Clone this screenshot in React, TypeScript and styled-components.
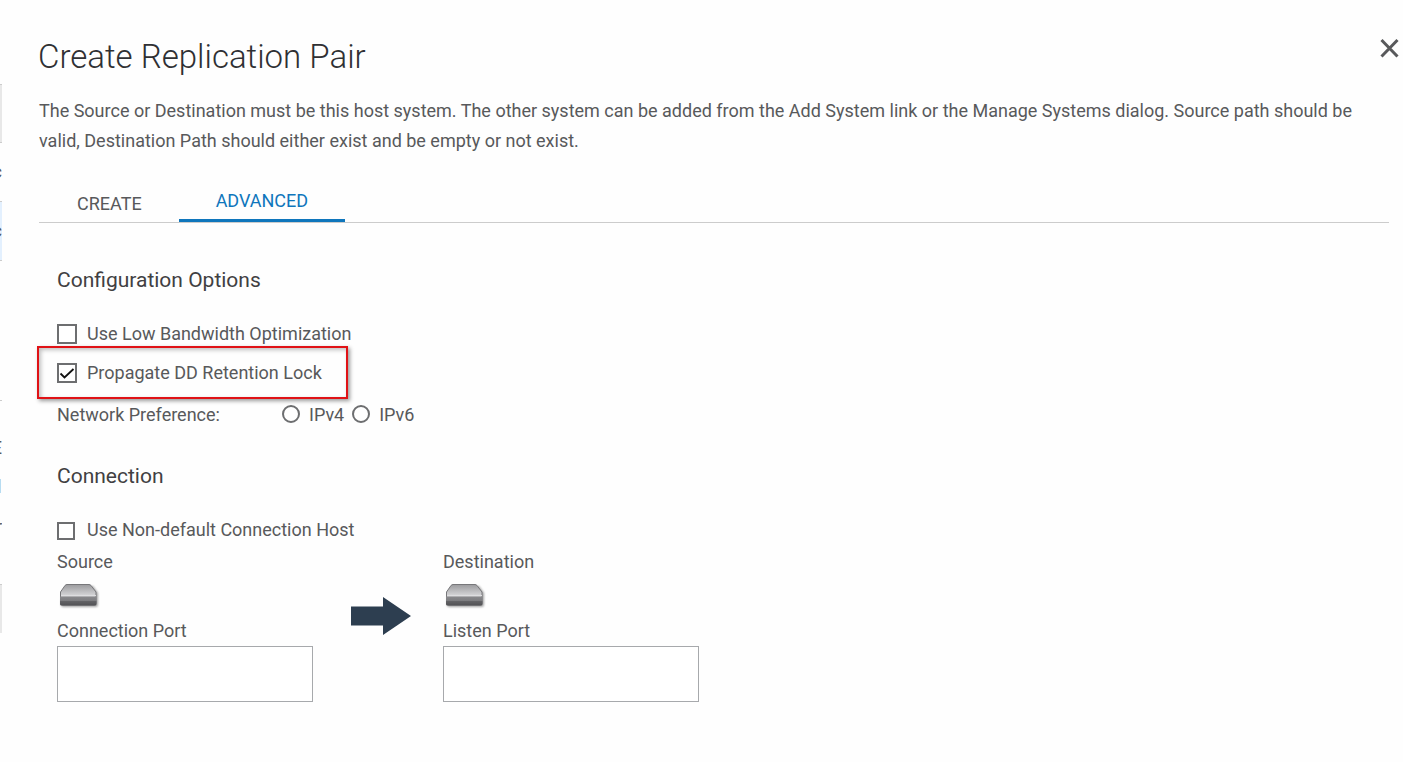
import React, { useState } from "react";
import styled, { createGlobalStyle } from "styled-components";

const GlobalStyle = createGlobalStyle`
  *, *::before, *::after { box-sizing: border-box; }
  body {
    margin: 0;
    background: #fefefe;
    color: #58595b;
    font-family: Roboto, "Liberation Sans", sans-serif;
    font-size: 18px;
    line-height: 30px;
  }
`;

const Page = styled.div`
  display: flex;
  align-items: stretch;
  min-height: 100vh;
`;

/* Edge of the page that stays visible beside the dialog */
const Backdrop = styled.div`
  flex: 0 0 2px;
  overflow: hidden;
  padding-top: 84px;
`;

const Cell = styled.div<{ $height: number; $fill?: string; $top?: boolean; $bottom?: boolean }>`
  display: flex;
  align-items: center;
  justify-content: flex-end;
  overflow: hidden;
  width: 2px;
  height: ${(p) => p.$height}px;
  background: ${(p) => p.$fill ?? "transparent"};
  border-top: ${(p) => (p.$top ? "1px solid #cccccc" : "0")};
  border-bottom: ${(p) => (p.$bottom ? "1px solid #cccccc" : "0")};
`;

const Accent = styled.div`
  width: 1px;
  height: 14px;
  background: #b7dcf1;
`;

const Dialog = styled.section`
  flex: 1;
  min-width: 0;
  padding: 33px 14px 60px 37px;
`;

const Header = styled.header`
  display: flex;
  justify-content: space-between;
  align-items: flex-start;
  margin-right: -14px;
  margin-left: -1px;
`;

const Title = styled.h1`
  margin: 0;
  color: #2f3033;
  font-size: 33px;
  font-weight: 300;
  line-height: 48px;
`;

const CloseButton = styled.button`
  display: flex;
  margin: 3px 0 0;
  padding: 0;
  border: 0;
  background: none;
  cursor: pointer;
`;

const Description = styled.p`
  margin: 15px 24px 0 0;
`;

const Tabs = styled.div`
  display: flex;
  align-items: flex-end;
  height: 47px;
  margin: 20px 0 39px;
  padding-left: 1px;
  border-bottom: 1px solid #cccccc;
`;

const Tab = styled.button<{ $active?: boolean }>`
  height: 43px;
  padding: ${(p) => (p.$active ? "4px 37px 0" : "7px 37px 0")};
  border: 0;
  border-bottom: ${(p) => (p.$active ? "3px solid #0f76bc" : "0")};
  background: none;
  color: ${(p) => (p.$active ? "#0f76bc" : "#58595b")};
  font: inherit;
  cursor: pointer;
`;

const Body = styled.form`
  display: flex;
  flex-direction: column;
  align-items: flex-start;
  padding-left: 18px;
`;

const Heading = styled.h2`
  margin: 0;
  color: #414042;
  font-size: 21px;
  font-weight: 400;
  line-height: 36px;
`;

const Choice = styled.label`
  display: flex;
  align-items: center;
`;

const OptionList = styled.div`
  display: flex;
  flex-direction: column;
  align-items: flex-start;
  padding-top: 21px;
`;

const Highlight = styled.div`
  width: 311px;
  height: 53px;
  margin: -3px 0 1px -20px;
  padding: 10px 18px 7px;
  border: 2px solid #e01216;
  box-shadow: 2px 2px 4px rgba(0, 0, 0, 0.4), inset 2px 2px 4px rgba(0, 0, 0, 0.25);
`;

const Checkbox = styled.input<{ $compact?: boolean }>`
  appearance: none;
  width: ${(p) => (p.$compact ? 18 : 20)}px;
  height: ${(p) => (p.$compact ? 18 : 20)}px;
  margin: ${(p) => (p.$compact ? "2px 12px 0 0" : "0 10px 0 0")};
  border: 2px solid #6d6e70;
  background: #ffffff;

  &:checked {
    background: #ffffff
      url("data:image/svg+xml,%3Csvg xmlns='http://www.w3.org/2000/svg' viewBox='0 0 16 16'%3E%3Cpath d='M1.500 8.500 5.500 12.500 14.500 4' fill='none' stroke='%23111' stroke-width='1.800'/%3E%3C/svg%3E")
      center / 16px 16px no-repeat;
  }
`;

const RadioRow = styled.fieldset`
  display: flex;
  align-items: center;
  margin: 0 0 28px;
  padding: 0;
  border: 0;
`;

const RadioCaption = styled.span`
  width: 225px;
`;

const Radio = styled.input`
  appearance: none;
  width: 18px;
  height: 18px;
  margin: 0 9px 2px 0;
  border: 2px solid #6d6e70;
  border-radius: 50%;
  background: #ffffff;

  &:checked { box-shadow: inset 0 0 0 3px #ffffff; background: #6d6e70; }
`;

const RadioChoice = styled(Choice)`
  margin-right: 8px;
`;

const Endpoints = styled.div`
  display: flex;
  align-items: flex-start;
  padding-top: 2px;
`;

const Endpoint = styled.div`
  display: flex;
  flex-direction: column;
  width: 256px;
`;

const PortInput = styled.input`
  width: 100%;
  height: 56px;
  padding: 0 12px;
  border: 1px solid #a7a9ac;
  border-radius: 0;
  background: #ffffff;
  color: inherit;
  font: inherit;
`;

const DriveSlot = styled.div`
  display: flex;
  align-items: center;
  height: 39px;
  padding: 0 0 3px 2px;
`;

const ArrowSlot = styled.div`
  display: flex;
  justify-content: center;
  width: 130px;
  padding: 50px 0 0 6px;
`;

const Drive = ({ id }: { id: string }) => (
  <svg width="42" height="28" viewBox="0 0 42 28" aria-hidden="true">
    <defs>
      <linearGradient id={`${id}-lid`} gradientUnits="userSpaceOnUse" x1="0" y1="3" x2="0" y2="14">
        <stop offset="0" stopColor="#98989b" />
        <stop offset="1" stopColor="#d2d2d4" />
      </linearGradient>
      <linearGradient id={`${id}-face`} x1="0" y1="0" x2="0" y2="1">
        <stop offset="0" stopColor="#8a8a8d" />
        <stop offset="0.5" stopColor="#7c7c7f" />
        <stop offset="0.55" stopColor="#626265" />
        <stop offset="1" stopColor="#525255" />
      </linearGradient>
      <filter id={`${id}-blur`} x="-20%" y="-20%" width="140%" height="150%">
        <feGaussianBlur stdDeviation="1" />
      </filter>
    </defs>
    <path d="M3 12 8 5H34L39 12V23Q39 26 37 26H4Q2 26 2 23Z" fill="#000" opacity=".35" filter={`url(#${id}-blur)`} />
    <path d="M1.500 11 6 4.500Q7 3.500 8 3.500H30Q31 3.500 32 4.500L37 11V22Q37 24 35 24H3.500Q1.500 24 1.500 22Z" fill={`url(#${id}-lid)`} stroke="#77777a" />
    <path d="M1 15.500H37.500V23Q37.500 24.500 36 24.500H2.500Q1 24.500 1 23Z" fill={`url(#${id}-face)`} />
    <path d="M2 14.500H37" stroke="#dedee0" />
  </svg>
);

export default function App() {
  const [lowBandwidth, setLowBandwidth] = useState(false);
  const [retention, setRetention] = useState(true);
  const [customHost, setCustomHost] = useState(false);

  return (
    <>
      <GlobalStyle />
      <Page>
        <Backdrop aria-hidden="true">
          <Cell $height={59} $fill="#e8e8e8" $top $bottom />
          <Cell $height={58}>c</Cell>
          <Cell $height={60} $fill="#e3f0fe" $top $bottom>c</Cell>
          <Cell $height={140} $bottom />
          <Cell $height={15} />
          <Cell $height={63}>E</Cell>
          <Accent />
          <Cell $height={68}>r</Cell>
          <Cell $height={23} />
          <Cell $height={49} $fill="#e8e8e8" $top />
        </Backdrop>
        <Dialog role="dialog" aria-labelledby="dialog-title">
          <Header>
            <Title id="dialog-title">Create Replication Pair</Title>
            <CloseButton type="button" aria-label="Close">
              <svg width="26" height="24" viewBox="0 0 26 24" fill="none" stroke="#58595b" strokeWidth="3">
                <path d="M4.500 4 20.500 20.500M20.500 4 4.500 20.500" />
              </svg>
            </CloseButton>
          </Header>
          <Description>
            The Source or Destination must be this host system. The other system can be added from the Add System link
            or the Manage Systems dialog. Source path should be valid, Destination Path should either exist and be
            empty or not exist.
          </Description>
          <Tabs role="tablist">
            <Tab type="button" role="tab" aria-selected={false}>CREATE</Tab>
            <Tab type="button" role="tab" aria-selected $active>ADVANCED</Tab>
          </Tabs>
          <Body onSubmit={(e) => e.preventDefault()}>
            <Heading>Configuration Options</Heading>
            <OptionList>
              <Choice>
                <Checkbox type="checkbox" checked={lowBandwidth} onChange={(e) => setLowBandwidth(e.target.checked)} />
                Use Low Bandwidth Optimization
              </Choice>
              <Highlight>
                <Choice>
                  <Checkbox type="checkbox" checked={retention} onChange={(e) => setRetention(e.target.checked)} />
                  Propagate DD Retention Lock
                </Choice>
              </Highlight>
            </OptionList>
            <RadioRow aria-label="Network Preference">
              <RadioCaption>Network Preference:</RadioCaption>
              <RadioChoice><Radio type="radio" name="ip" />IPv4</RadioChoice>
              <RadioChoice><Radio type="radio" name="ip" />IPv6</RadioChoice>
            </RadioRow>
            <Heading>Connection</Heading>
            <OptionList>
              <Choice>
                <Checkbox $compact type="checkbox" checked={customHost} onChange={(e) => setCustomHost(e.target.checked)} />
                Use Non-default Connection Host
              </Choice>
            </OptionList>
            <Endpoints>
              <Endpoint>
                <span>Source</span>
                <DriveSlot><Drive id="source" /></DriveSlot>
                <label htmlFor="connection-port">Connection Port</label>
                <PortInput id="connection-port" type="text" />
              </Endpoint>
              <ArrowSlot>
                <svg width="60" height="38" viewBox="0 0 60 38" aria-hidden="true">
                  <path d="M0 9.500H32V0L60 19 32 38V28.500H0Z" fill="#2d3e50" />
                </svg>
              </ArrowSlot>
              <Endpoint>
                <span>Destination</span>
                <DriveSlot><Drive id="destination" /></DriveSlot>
                <label htmlFor="listen-port">Listen Port</label>
                <PortInput id="listen-port" type="text" />
              </Endpoint>
            </Endpoints>
          </Body>
        </Dialog>
      </Page>
    </>
  );
}
